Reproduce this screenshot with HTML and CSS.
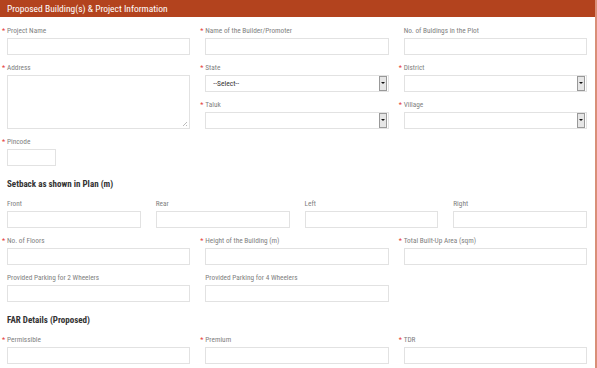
FILE: index.html
```html
<!DOCTYPE html>
<html lang="en">

<head>
    <meta charset="UTF-8">
    <meta name="viewport" content="width=device-width, initial-scale=1.0">
    <title>Proposed Building(s) &amp; Project Information</title>
    <link rel="stylesheet" href="styles.css">
</head>

<body>

    <div class="panel">
        <div class="panel-heading">Proposed Building(s) &amp; Project Information</div>

        <div class="panel-body">
            <div class="row cols-3">
                <div class="field">
                    <label class="req">Project Name</label>
                    <input type="text">
                </div>
                <div class="field">
                    <label class="req">Name of the Builder/Promoter</label>
                    <input type="text">
                </div>
                <div class="field">
                    <label>No. of Buldings in the Plot</label>
                    <input type="text">
                </div>
            </div>

            <div class="row cols-3">
                <div class="field">
                    <label class="req">Address</label>
                    <div class="textarea-box">
                        <textarea></textarea>
                    </div>
                </div>
                <div class="stack">
                    <div class="field">
                        <label class="req">State</label>
                        <div class="select-box"><span class="select-text">--Select--</span><span class="select-btn"></span></div>
                    </div>
                    <div class="field">
                        <label class="req">Taluk</label>
                        <div class="select-box"><span class="select-text"></span><span class="select-btn"></span></div>
                    </div>
                </div>
                <div class="stack">
                    <div class="field">
                        <label class="req">District</label>
                        <div class="select-box"><span class="select-text"></span><span class="select-btn"></span></div>
                    </div>
                    <div class="field">
                        <label class="req">Village</label>
                        <div class="select-box"><span class="select-text"></span><span class="select-btn"></span></div>
                    </div>
                </div>
            </div>

            <div class="row">
                <div class="field">
                    <label class="req">Pincode</label>
                    <input type="text" class="short">
                </div>
            </div>

            <h4>Setback as shown in Plan (m)</h4>

            <div class="row cols-4">
                <div class="field">
                    <label>Front</label>
                    <input type="text">
                </div>
                <div class="field">
                    <label>Rear</label>
                    <input type="text">
                </div>
                <div class="field">
                    <label>Left</label>
                    <input type="text">
                </div>
                <div class="field">
                    <label>Right</label>
                    <input type="text">
                </div>
            </div>

            <div class="row cols-3">
                <div class="field">
                    <label class="req">No. of Floors</label>
                    <input type="text">
                </div>
                <div class="field">
                    <label class="req">Height of the Building (m)</label>
                    <input type="text">
                </div>
                <div class="field">
                    <label class="req">Total Built-Up Area (sqm)</label>
                    <input type="text">
                </div>
            </div>

            <div class="row cols-3">
                <div class="field">
                    <label>Provided Parking for 2 Wheelers</label>
                    <input type="text">
                </div>
                <div class="field">
                    <label>Provided Parking for 4 Wheelers</label>
                    <input type="text">
                </div>
            </div>

            <h4>FAR Details (Proposed)</h4>

            <div class="row cols-3">
                <div class="field">
                    <label class="req">Permissible</label>
                    <input type="text">
                </div>
                <div class="field">
                    <label class="req">Premium</label>
                    <input type="text">
                </div>
                <div class="field">
                    <label class="req">TDR</label>
                    <input type="text">
                </div>
            </div>
        </div>
    </div>

</body>

</html>
```

FILE: styles.css
```css
body {
    margin: 0;
    font-family: "Roboto Condensed", "DejaVu Sans Condensed", Roboto, sans-serif;
    font-stretch: condensed;
    background: #fff;
    color: #808080;
    overflow: hidden;
}

.panel {
    width: 595px;
    border-right: 2px solid #d98f78;
    min-height: 368px;
}

.panel-heading {
    background: #b3431e;
    color: #fff;
    font-size: 9.5px;
    height: 17px;
    line-height: 17px;
    padding-left: 7px;
}

.panel-body {
    padding: 7px 8px 0 7px;
}

.row {
    display: grid;
    gap: 15px;
    margin-bottom: 6px;
}

.cols-3 {
    grid-template-columns: repeat(3, 1fr);
}

.cols-4 {
    grid-template-columns: repeat(4, 1fr);
}

.stack {
    display: flex;
    flex-direction: column;
    gap: 6px;
}

.field label {
    display: block;
    position: relative;
    font-size: 7.3px;
    line-height: 9px;
    color: #808080;
    margin: 2px 0 3px;
}

.field label.req::before {
    content: "*";
    position: absolute;
    left: -5px;
    top: 0;
    color: #e53935;
}

input,
.select-box,
.textarea-box {
    display: block;
    box-sizing: border-box;
    width: 100%;
    height: 17px;
    border: 1px solid #e2e2e2;
    background: #fff;
    margin: 0;
    padding: 0 6px;
    font-family: inherit;
    font-size: 8px;
}

input.short {
    width: 49px;
}

.textarea-box {
    height: 54px;
    padding: 0;
    position: relative;
}

.textarea-box textarea {
    display: block;
    width: 100%;
    height: 100%;
    box-sizing: border-box;
    border: none;
    resize: none;
    margin: 0;
}

.textarea-box::after {
    content: "";
    position: absolute;
    right: 2px;
    bottom: 2px;
    width: 5px;
    height: 5px;
    background: linear-gradient(135deg, transparent 55%, #bbb 55%, #bbb 65%, transparent 65%, transparent 80%, #bbb 80%);
}

.select-box {
    display: flex;
    align-items: center;
    justify-content: space-between;
    padding: 0 1px 0 7px;
    color: #333;
    font-size: 7.5px;
}

.select-btn {
    width: 6px;
    height: 13px;
    border: 1px solid #999;
    background: #e6e6e6;
    position: relative;
}

.select-btn::after {
    content: "";
    position: absolute;
    left: 1px;
    top: 5px;
    border-left: 2px solid transparent;
    border-right: 2px solid transparent;
    border-top: 2px solid #111;
}

h4 {
    margin: 12px 0 7px;
    font-size: 9px;
    line-height: 12px;
    font-weight: bold;
    color: #333;
}
```
